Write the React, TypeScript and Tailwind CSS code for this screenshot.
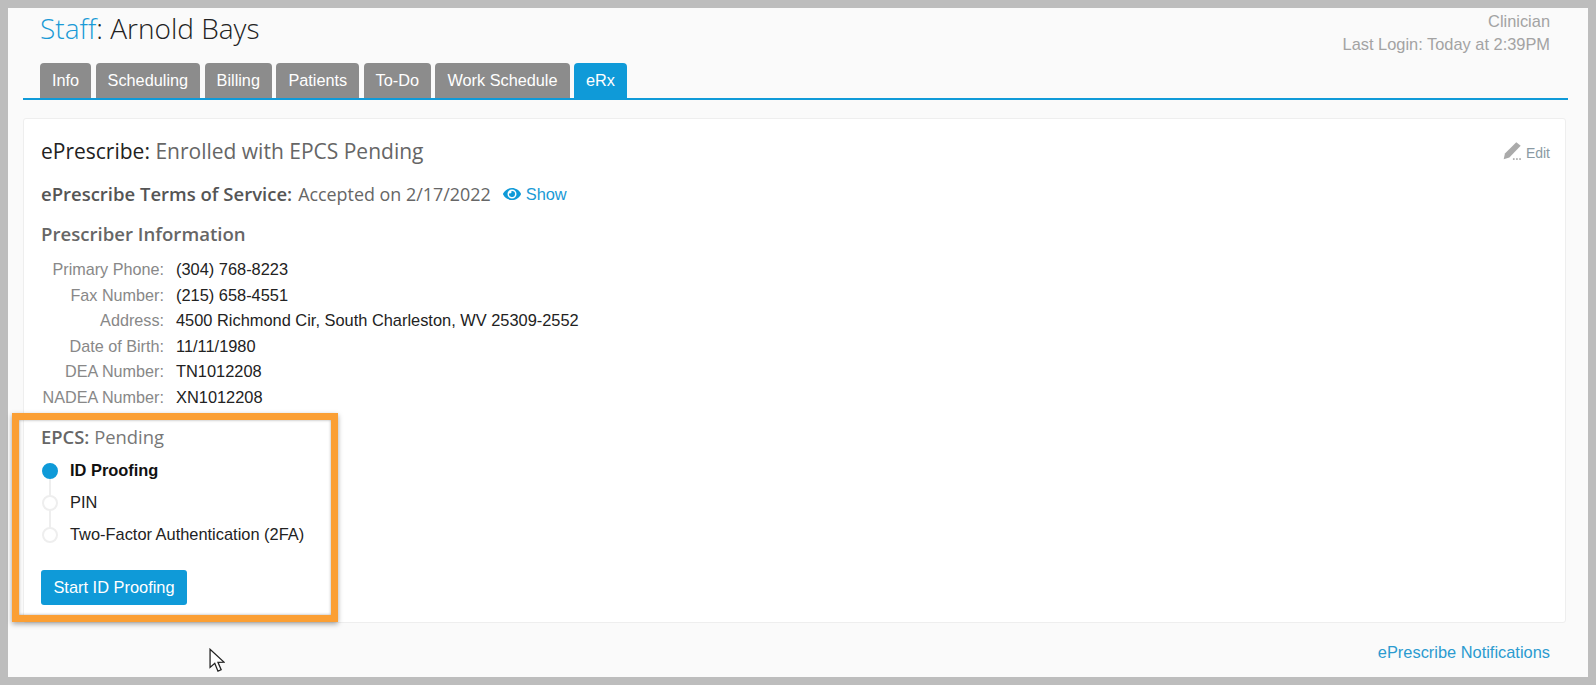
import React from 'react';
import { FaEye } from 'react-icons/fa';

const TABS = ['Info', 'Scheduling', 'Billing', 'Patients', 'To-Do', 'Work Schedule', 'eRx'];

const PRESCRIBER = [
  ['Primary Phone:', '(304) 768-8223'],
  ['Fax Number:', '(215) 658-4551'],
  ['Address:', '4500 Richmond Cir, South Charleston, WV 25309-2552'],
  ['Date of Birth:', '11/11/1980'],
  ['DEA Number:', 'TN1012208'],
  ['NADEA Number:', 'XN1012208'],
];

const STEPS = ['ID Proofing', 'PIN', 'Two-Factor Authentication (2FA)'];

function EditPencil() {
  return (
    <svg width="21" height="21" viewBox="0 0 20 20" className="-mt-[5px] text-[#aaaaaa]">
      <path d="M13.6 1.2 L17.8 4.6 L7 15.6 L1.6 17.4 L2.8 12 Z" fill="currentColor" />
      <rect x="10.4" y="16.4" width="1.6" height="1.6" fill="currentColor" />
      <rect x="13.4" y="16.4" width="1.6" height="1.6" fill="currentColor" />
      <rect x="16.4" y="16.4" width="1.6" height="1.6" fill="currentColor" />
    </svg>
  );
}

export default function App() {
  return (
    <div className="h-[685px] bg-[#bdbdbd] p-2 font-['Liberation_Sans',sans-serif]">
      <div className="flex h-full flex-col bg-[#fafafa] pl-[15px] pr-[20px]">
        {/* Header */}
        <div className="flex h-[55px] justify-between pl-[17px] pr-[18px]">
          <h1 className="mt-[1px] font-['Open_Sans',sans-serif] text-[28px] leading-[38px] font-light text-[#222222]">
            <span className="text-[#1a9ad6]">Staff</span>: Arnold Bays
          </h1>
          <div className="mt-[2px] text-right text-[16.4px] leading-[23px] text-[#a3a3a3]">
            <div>Clinician</div>
            <div>Last Login: Today at 2:39PM</div>
          </div>
        </div>

        {/* Tabs */}
        <div className="flex gap-[4.4px] border-b-2 border-[#0f9ad8] pl-[17px]">
          {TABS.map(t => (
            <div
              key={t}
              className={`flex h-[35px] items-center rounded-t-[4px] px-[12px] text-[16.3px] text-white ${
                t === 'eRx' ? 'bg-[#0f9ad8]' : 'bg-[#8c8c8c]'
              }`}>
              {t}
            </div>
          ))}
        </div>

        {/* Card */}
        <div className="relative mt-[18px] mr-[2px] h-[505px] rounded-[3px] border border-[#eeeeee] bg-white pt-[18px] pr-[15px] pl-[17px]">
          <div className="flex items-start justify-between">
            <h2 className="font-['Open_Sans',sans-serif] text-[21px] leading-[28px] text-[#666666]">
              <span className="text-[#222222]">ePrescribe:</span> Enrolled with EPCS Pending
            </h2>
            <div className="mt-[6px] flex items-center gap-[3px] text-[14px] text-[#8a9aa3]">
              <EditPencil />
              Edit
            </div>
          </div>

          <div className="mt-[17px] flex items-center font-['Open_Sans',sans-serif] text-[17.9px] leading-[24px] text-[#666666]">
            <span className="text-[18.5px] font-semibold text-[#555555]">ePrescribe Terms of Service:</span>
            <span className="ml-[6px]">Accepted on 2/17/2022</span>
            <span className="ml-[12px] flex items-center gap-[5px] font-['Liberation_Sans',sans-serif] text-[16.4px] text-[#1a9ad6]">
              <FaEye className="h-[18px] w-[18px] text-[#0f9ad8]" />
              Show
            </span>
          </div>

          <h3 className="mt-[16px] font-['Open_Sans',sans-serif] text-[18.6px] leading-[24px] font-semibold text-[#666666]">
            Prescriber Information
          </h3>

          <div className="mt-[11px] grid grid-cols-[123px_1fr] gap-x-[12px] text-[16.4px] leading-[25.6px]">
            {PRESCRIBER.map(([label, value]) => (
              <React.Fragment key={label}>
                <div className="whitespace-nowrap text-right text-[16.2px] text-[#888888]">{label}</div>
                <div className="text-[#222222]">{value}</div>
              </React.Fragment>
            ))}
          </div>

          <div className="mt-[14px] font-['Open_Sans',sans-serif] text-[18.4px] leading-[24px] text-[#777777]">
            <span className="font-semibold text-[#666666]">EPCS:</span> Pending
          </div>

          {/* Steps */}
          <div className="relative mt-[12px] flex flex-col gap-[12px] pl-px">
            <div className="absolute top-[12px] left-[8px] h-[64px] w-[2px] bg-[#eeeeee]" />
            {STEPS.map((s, i) => (
              <div key={s} className="relative flex h-[20px] items-center gap-[12px] text-[16.4px] text-[#222222]">
                <span
                  className={`h-[16px] w-[16px] rounded-full border-2 ${
                    i === 0 ? 'border-[#0f9ad8] bg-[#0f9ad8]' : 'border-[#eeeeee] bg-white'
                  }`}
                />
                <span className={i === 0 ? 'font-bold text-[#111111]' : ''}>{s}</span>
              </div>
            ))}
          </div>

          <button className="mt-[25px] h-[35px] w-[146px] rounded-[3px] bg-[#0f9ad8] text-[16.4px] text-white">
            Start ID Proofing
          </button>

          {/* Orange highlight */}
          <div className="pointer-events-none absolute top-[294px] left-[-12px] h-[209px] w-[326px] border-[7px] border-[#fb9f34] shadow-[0_2px_5px_rgba(0,0,0,0.35),inset_0_0_3px_rgba(0,0,0,0.35)]" />
        </div>

        {/* Footer */}
        <div className="relative mt-[17px] pr-[18px] text-right text-[16.4px] text-[#2b9bd0]">
          ePrescribe Notifications
          <svg width="16" height="25" viewBox="0 0 15 23" className="absolute top-[8px] left-[186px]">
            <path d="M1 1 L1 18 L5.4 14.2 L8.4 21.5 L11.4 20.2 L8.4 13.2 L14 13 Z" fill="#ffffff" stroke="#222222" strokeWidth="1.2" />
          </svg>
        </div>
      </div>
    </div>
  );
}
